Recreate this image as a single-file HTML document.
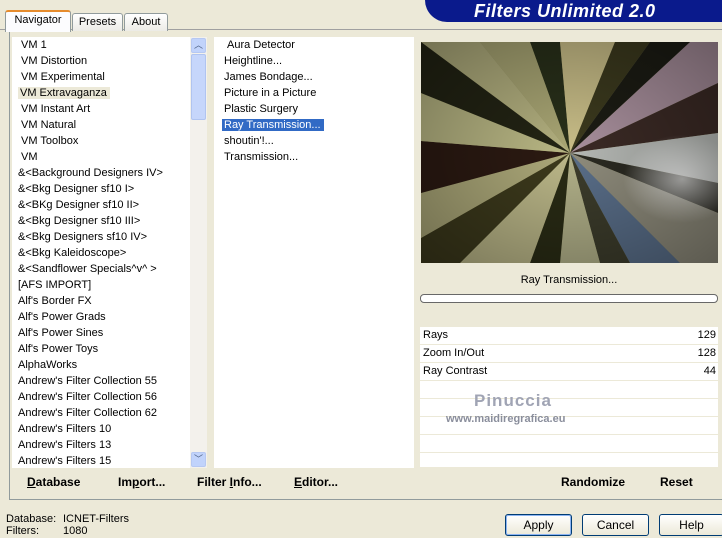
<!DOCTYPE html>
<html><head><style>
body{margin:0;width:722px;height:538px;background:#ece9d8;font-family:"Liberation Sans",sans-serif;font-size:11px;color:#000;position:relative;overflow:hidden}
.a{position:absolute}
.tab{position:absolute;border:1px solid #919b9c;border-bottom:none;background:linear-gradient(#fff,#ecebe6);border-radius:3px 3px 0 0;text-align:center;font-size:11px;line-height:16px}
.list div{height:16px;line-height:16px;white-space:nowrap}
.row{position:absolute;left:420px;width:298px;height:17px;background:#fff;border-bottom:1px solid #ece9d8;line-height:17px}
.btn{position:absolute;border:1px solid #003c74;border-radius:3px;background:linear-gradient(#fff,#ece9d8);text-align:center;line-height:20px;height:20px;font-size:12px}
.b{font-weight:bold;font-size:12px;position:absolute;top:475px}
</style></head><body>
<div class="a" style="left:425px;top:0;width:297px;height:22px;background:#0a1a8c;border-radius:0 0 0 22px"></div>
<div class="a" style="left:474px;top:1px;color:#fff;font-weight:bold;font-style:italic;font-size:18px;letter-spacing:0.5px">Filters Unlimited 2.0</div>
<div class="a" style="left:0;top:29px;width:722px;height:1px;background:#a0a0a0"></div>
<div class="a" style="left:9px;top:30px;width:712px;height:469px;border:1px solid #919b9c;border-top:none;background:#ece9d8"></div>
<div class="tab" style="left:5px;top:10px;width:64px;height:20px;background:#fcfcfe;border-top:2px solid #e68b2c">Navigator</div>
<div class="tab" style="left:72px;top:13px;width:49px;height:17px">Presets</div>
<div class="tab" style="left:124px;top:13px;width:42px;height:17px">About</div>
<div class="a list" style="left:12px;top:37px;width:178px;height:431px;background:#fff;padding-left:6px;box-sizing:border-box;padding-top:0">
<div>&nbsp;VM 1</div><div>&nbsp;VM Distortion</div><div>&nbsp;VM Experimental</div><div><span style="background:#ece9d8;padding:0 3px 0 2px">VM Extravaganza</span></div><div>&nbsp;VM Instant Art</div><div>&nbsp;VM Natural</div><div>&nbsp;VM Toolbox</div><div>&nbsp;VM</div><div>&amp;&lt;Background Designers IV&gt;</div><div>&amp;&lt;Bkg Designer sf10 I&gt;</div><div>&amp;&lt;BKg Designer sf10 II&gt;</div><div>&amp;&lt;Bkg Designer sf10 III&gt;</div><div>&amp;&lt;Bkg Designers sf10 IV&gt;</div><div>&amp;&lt;Bkg Kaleidoscope&gt;</div><div>&amp;&lt;Sandflower Specials^v^ &gt;</div><div>[AFS IMPORT]</div><div>Alf's Border FX</div><div>Alf's Power Grads</div><div>Alf's Power Sines</div><div>Alf's Power Toys</div><div>AlphaWorks</div><div>Andrew's Filter Collection 55</div><div>Andrew's Filter Collection 56</div><div>Andrew's Filter Collection 62</div><div>Andrew's Filters 10</div><div>Andrew's Filters 13</div><div>Andrew's Filters 15</div></div>
<div class="a" style="left:190px;top:37px;width:17px;height:431px;background:#f3f1ec"></div>
<div class="a" style="left:191px;top:38px;width:15px;height:15px;background:#c1d3fb;border:1px solid #b6c8f2;border-radius:2px;box-sizing:border-box;text-align:center;font-size:9px;color:#4d6185;line-height:13px">︿</div>
<div class="a" style="left:191px;top:54px;width:15px;height:66px;background:#c6d6fb;border:1px solid #b0c4f0;border-radius:2px;box-sizing:border-box"></div>
<div class="a" style="left:191px;top:452px;width:15px;height:15px;background:#c1d3fb;border:1px solid #b6c8f2;border-radius:2px;box-sizing:border-box;text-align:center;font-size:9px;color:#4d6185;line-height:13px">﹀</div>
<div class="a list" style="left:214px;top:37px;width:200px;height:431px;background:#fff;padding-left:10px;box-sizing:border-box">
<div>&nbsp;Aura Detector</div><div>Heightline...</div><div>James Bondage...</div><div>Picture in a Picture</div><div>Plastic Surgery</div><div><span style="background:#316ac5;color:#fff;padding:0 3px 0 2px;margin-left:-2px">Ray Transmission...</span></div><div>shoutin'!...</div><div>Transmission...</div></div>
<svg class="a" style="left:421px;top:42px" width="297" height="221" viewBox="0 0 297 221">
<defs><radialGradient id="g" cx="0.5" cy="0.5" r="0.7"><stop offset="0" stop-color="#000" stop-opacity="0"/><stop offset="1" stop-color="#000" stop-opacity="0.35"/></radialGradient>
<radialGradient id="w" cx="0.88" cy="0.62" r="0.2"><stop offset="0" stop-color="#fff" stop-opacity="0.7"/><stop offset="1" stop-color="#fff" stop-opacity="0"/></radialGradient></defs>
<rect width="297" height="221" fill="#8f8d5c"/>
<g transform="translate(149,111)">
<polygon points="0,0 -149,-111 -90,-111" fill="#b3b07f"/>
<polygon points="0,0 -40,-111 -10,-111" fill="#29301a"/>
<polygon points="0,0 -10,-111 45,-111" fill="#c9be88"/>
<polygon points="0,0 45,-111 80,-111" fill="#3c3a1e"/>
<polygon points="0,0 120,-111 148,-111 148,-70" fill="#a88f9c"/>
<polygon points="0,0 80,-111 120,-111" fill="#1c1c14"/>
<polygon points="0,0 148,-70 148,-20" fill="#3b2a25"/>
<polygon points="0,0 148,-20 148,30" fill="#b5b8b4"/>
<polygon points="0,0 148,30 148,60" fill="#2b2a22"/>
<polygon points="0,0 148,60 148,110 110,110" fill="#8f8c7c"/>
<polygon points="0,0 110,110 60,110" fill="#5a6f8a"/>
<polygon points="0,0 60,110 30,110" fill="#3d3d2c"/>
<polygon points="0,0 30,110 -10,110" fill="#b3b28a"/>
<polygon points="0,0 -10,110 -40,110" fill="#2a2c15"/>
<polygon points="0,0 -40,110 -110,110" fill="#bcb889"/>
<polygon points="0,0 -110,110 -149,110 -149,85" fill="#3d3a1c"/>
<polygon points="0,0 -149,85 -149,40" fill="#aeaa7a"/>
<polygon points="0,0 -149,40 -149,-12" fill="#2c1a12"/>
<polygon points="0,0 -149,-12 -149,-60" fill="#b9b784"/>
<polygon points="0,0 -149,-60 -149,-111" fill="#232414"/>
<polygon points="0,0 -90,-111 -40,-111" fill="#a9a674"/>
</g>
<rect width="297" height="221" fill="url(#w)"/>
<rect width="297" height="221" fill="url(#g)"/>
</svg>
<div class="a" style="left:420px;top:274px;width:298px;text-align:center;font-size:11px">Ray Transmission...</div>
<div class="a" style="left:420px;top:294px;width:298px;height:9px;border:1px solid #686868;border-radius:4px;background:#fff;box-sizing:border-box"></div>
<div class="row" style="top:327px"><span style="padding-left:3px">Rays</span><span style="float:right;padding-right:2px">129</span></div>
<div class="row" style="top:345px"><span style="padding-left:3px">Zoom In/Out</span><span style="float:right;padding-right:2px">128</span></div>
<div class="row" style="top:363px"><span style="padding-left:3px">Ray Contrast</span><span style="float:right;padding-right:2px">44</span></div>
<div class="row" style="top:381px"></div><div class="row" style="top:399px"></div><div class="row" style="top:417px"></div><div class="row" style="top:435px"></div><div class="row" style="top:453px;height:14px"></div>
<div class="a" style="left:474px;top:391px;color:#a0a4b4;font-size:17px;font-weight:bold;letter-spacing:1px">Pinuccia</div>
<div class="a" style="left:446px;top:413px;color:#8a8e9c;font-size:11px;font-weight:bold">www.maidiregrafica.eu</div>
<div class="b" style="left:27px"><u>D</u>atabase</div>
<div class="b" style="left:118px">Im<u>p</u>ort...</div>
<div class="b" style="left:197px">Filter <u>I</u>nfo...</div>
<div class="b" style="left:294px"><u>E</u>ditor...</div>
<div class="b" style="left:561px">Randomize</div>
<div class="b" style="left:660px">Reset</div>
<div class="a" style="left:6px;top:513px;line-height:12px;font-size:11px">Database:</div>
<div class="a" style="left:63px;top:513px;line-height:12px;font-size:11px">ICNET-Filters</div>
<div class="a" style="left:6px;top:525px;line-height:12px;font-size:11px">Filters:</div>
<div class="a" style="left:63px;top:525px;line-height:12px;font-size:11px">1080</div>
<div class="btn" style="left:505px;top:514px;width:65px;box-shadow:inset 0 0 0 1px #8cb4f2">Apply</div>
<div class="btn" style="left:582px;top:514px;width:65px">Cancel</div>
<div class="btn" style="left:659px;top:514px;width:63px">Help</div>
</body></html>
